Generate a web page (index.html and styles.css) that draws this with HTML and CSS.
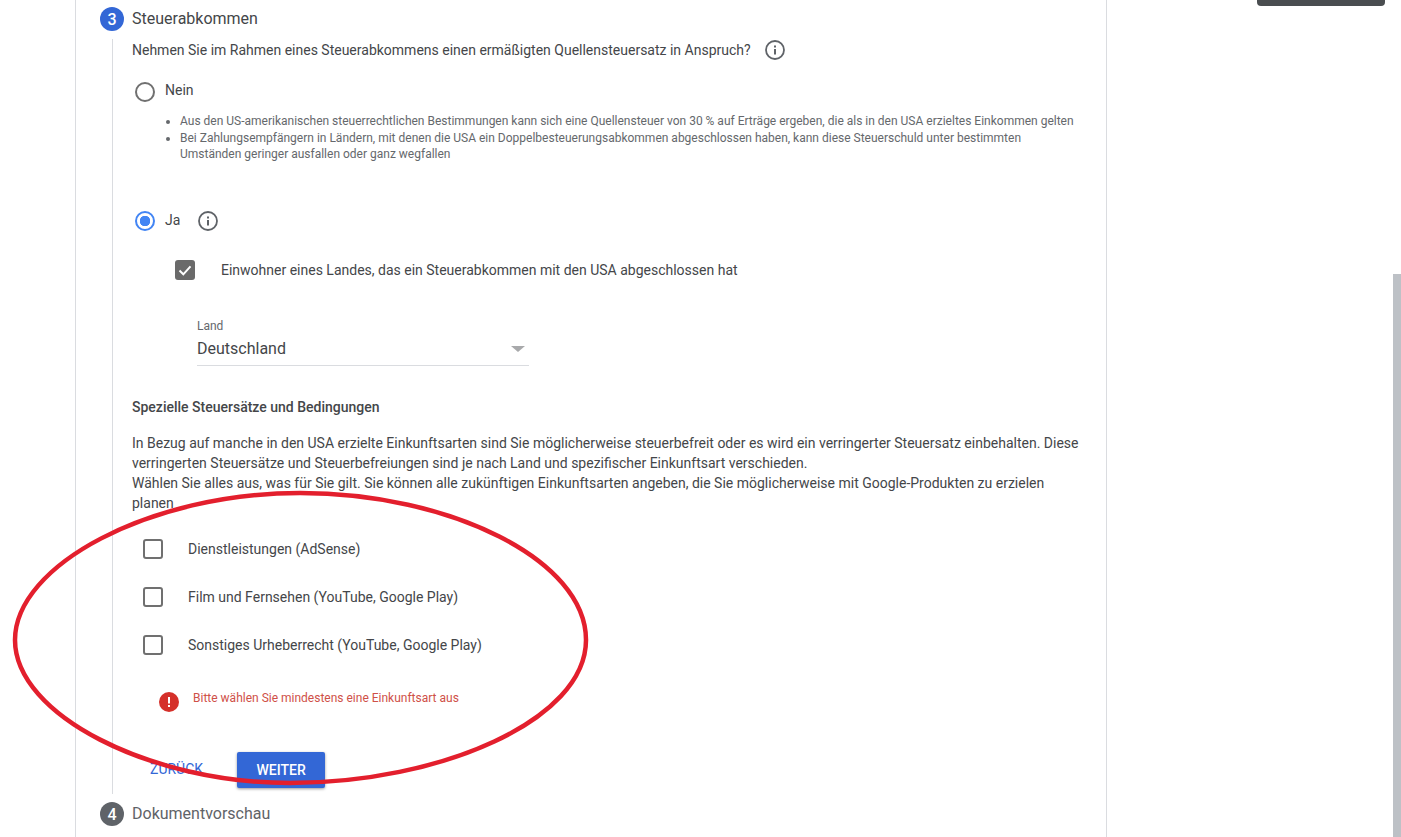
FILE: index.html
```html
<!DOCTYPE html>
<html lang="de">
<head>
  <meta charset="UTF-8" />
  <title>Steuerinformationen</title>
  <link rel="stylesheet" href="styles.css">
</head>
<body>
  <div class="topbar">
    <div class="top-tab"></div>
  </div>

  <div class="card">
    <div class="step-head">
      <span class="step-num active">3</span>
      <span class="step-title">Steuerabkommen</span>
    </div>

    <div class="step-body">
      <div class="question">
        <span>Nehmen Sie im Rahmen eines Steuerabkommens einen ermäßigten Quellensteuersatz in Anspruch?</span>
        <svg class="info" viewBox="0 0 20 20"><circle cx="10" cy="10" r="9" fill="none" stroke="#5f6368" stroke-width="1.8"/><rect x="9" y="9" width="2" height="5.5" fill="#5f6368"/><rect x="9" y="5.5" width="2" height="2" fill="#5f6368"/></svg>
      </div>

      <div class="radio-row nein">
        <span class="radio"></span>
        <span class="radio-label">Nein</span>
      </div>
      <ul class="notes">
        <li>Aus den US-amerikanischen steuerrechtlichen Bestimmungen kann sich eine Quellensteuer von 30 % auf Erträge ergeben, die als in den USA erzieltes Einkommen gelten</li>
        <li>Bei Zahlungsempfängern in Ländern, mit denen die USA ein Doppelbesteuerungsabkommen abgeschlossen haben, kann diese Steuerschuld unter bestimmten Umständen geringer ausfallen oder ganz wegfallen</li>
      </ul>

      <div class="radio-row ja">
        <span class="radio checked"></span>
        <span class="radio-label">Ja</span>
        <svg class="info" viewBox="0 0 20 20"><circle cx="10" cy="10" r="9" fill="none" stroke="#5f6368" stroke-width="1.8"/><rect x="9" y="9" width="2" height="5.5" fill="#5f6368"/><rect x="9" y="5.5" width="2" height="2" fill="#5f6368"/></svg>
      </div>

      <div class="resident">
        <span class="check on">
          <svg viewBox="0 0 20 20"><path d="M4.5 10.5l3.8 3.8 7.2-8" fill="none" stroke="#fff" stroke-width="2"/></svg>
        </span>
        <span>Einwohner eines Landes, das ein Steuerabkommen mit den USA abgeschlossen hat</span>
      </div>

      <div class="select">
        <div class="select-label">Land</div>
        <div class="select-value">
          <span>Deutschland</span>
          <span class="arrow"></span>
        </div>
      </div>

      <h3 class="sub">Spezielle Steuersätze und Bedingungen</h3>
      <p class="text">In Bezug auf manche in den USA erzielte Einkunftsarten sind Sie möglicherweise steuerbefreit oder es wird ein verringerter Steuersatz einbehalten. Diese verringerten Steuersätze und Steuerbefreiungen sind je nach Land und spezifischer Einkunftsart verschieden.<br>Wählen Sie alles aus, was für Sie gilt. Sie können alle zukünftigen Einkunftsarten angeben, die Sie möglicherweise mit Google-Produkten zu erzielen planen</p>

      <div class="options">
        <div class="option"><span class="check"></span><span>Dienstleistungen (AdSense)</span></div>
        <div class="option"><span class="check"></span><span>Film und Fernsehen (YouTube, Google Play)</span></div>
        <div class="option"><span class="check"></span><span>Sonstiges Urheberrecht (YouTube, Google Play)</span></div>
      </div>

      <div class="error">
        <svg class="error-icon" viewBox="0 0 20 20"><circle cx="10" cy="10" r="10" fill="#d5302a"/><rect x="9" y="5" width="2" height="6.5" fill="#fff"/><rect x="9" y="13" width="2" height="2" fill="#fff"/></svg>
        <span class="error-text">Bitte wählen Sie mindestens eine Einkunftsart aus</span>
      </div>

      <div class="actions">
        <button class="btn-back">ZURÜCK</button>
        <button class="btn-next">WEITER</button>
      </div>
    </div>

    <div class="step-head next">
      <span class="step-num">4</span>
      <span class="step-title muted">Dokumentvorschau</span>
    </div>
  </div>

  <div class="scrollbar"></div>

  <!-- rote Markierung ueber dem Screenshot, freihand gezogen -->
  <svg class="marker" viewBox="0 0 1401 837">
    <path d="M15 640C15 565 150 493 300 493C450 493 586 560 586 640C586 720 440 783 290 783C150 783 15 715 15 640Z" fill="none" stroke="#e31f2d" stroke-width="4.5"/>
  </svg>
</body>
</html>
```

FILE: styles.css
```css
html, body {
  height: 100%;
}

body {
  font-family: 'Roboto', sans-serif;
  font-size: 14px;
  color: #444649;
  background: #fff;
  margin: 0;
  padding: 0;
  overflow: hidden;
  position: relative;
}

.topbar {
  position: absolute;
  top: 0;
  right: 16px;
}

.top-tab {
  width: 128px;
  height: 6px;
  background: #4a4d50;
  border-radius: 0 0 4px 4px;
}

.card {
  width: 1006px;
  height: 837px;
  margin-left: 75px;
  border-left: 1px solid #dadce0;
  border-right: 1px solid #dadce0;
  padding: 7px 0 0 24px;
}

.step-head {
  display: flex;
  align-items: center;
  gap: 8px;
  height: 24px;
}

.step-num {
  width: 24px;
  height: 24px;
  border-radius: 50%;
  background: #5f6368;
  color: #fff;
  font-size: 16px;
  font-weight: 500;
  display: flex;
  align-items: center;
  justify-content: center;
}

.step-num.active {
  background: #3367d6;
}

.step-title {
  font-size: 16px;
  color: #444649;
  margin-top: -2px;
}

.step-title.muted {
  color: #5f6368;
}

.step-body {
  margin: 8px 0 8px 12px;
  padding-left: 19px;
  border-left: 1px solid #dadce0;
  height: 755px;
  box-sizing: border-box;
}

.question {
  display: flex;
  align-items: center;
  gap: 14px;
  height: 22px;
}

.info {
  width: 20px;
  height: 20px;
  flex: none;
}

.radio-row {
  display: flex;
  margin-left: 3px;
}

.radio-row.nein {
  margin-top: 21px;
}

.radio-row.ja {
  margin-top: 49px;
  align-items: center;
}

.radio-row.ja .info {
  margin-left: 18px;
}

.radio {
  width: 20px;
  height: 20px;
  box-sizing: border-box;
  border: 2px solid #707070;
  border-radius: 50%;
  background: #fff;
  flex: none;
}

.radio.checked {
  border-color: #4285f4;
  background: radial-gradient(circle, #4285f4 0 5px, #fff 5.5px);
}

.radio-label {
  margin-left: 10px;
  line-height: 20px;
  margin-top: -2px;
}

.notes {
  margin: 11px 0 0;
  padding: 0 0 0 48px;
  font-size: 12px;
  line-height: 16px;
  color: #65686c;
  width: 900px;
}

.notes li:first-child {
  margin-bottom: 1px;
}

.resident {
  display: flex;
  align-items: center;
  height: 20px;
  margin: 29px 0 0 43px;
}

.check {
  width: 20px;
  height: 20px;
  box-sizing: border-box;
  border: 2px solid #707070;
  border-radius: 3px;
  flex: none;
}

.check.on {
  border: 0;
  background: #6a6a6a;
  margin-right: 26px;
}

.check.on svg {
  display: block;
  width: 20px;
  height: 20px;
}

.select {
  width: 332px;
  margin: 39px 0 0 65px;
  border-bottom: 1px solid #dadce0;
}

.select-label {
  font-size: 12px;
  line-height: 14px;
  color: #65686c;
}

.select-value {
  display: flex;
  justify-content: space-between;
  align-items: center;
  font-size: 16px;
  line-height: 24px;
  height: 29px;
  padding: 1px 4px 2px 0;
  color: #444649;
}

.arrow {
  width: 0;
  height: 0;
  border-left: 7px solid transparent;
  border-right: 7px solid transparent;
  border-top: 6px solid #a8a9ab;
}

.sub {
  font-size: 14px;
  font-weight: 500;
  line-height: 20px;
  margin: 31px 0 0;
  color: #444649;
}

.text {
  margin: 16px 0 0;
  line-height: 20px;
  width: 950px;
}

.options {
  margin: 26px 0 0 11px;
  display: flex;
  flex-direction: column;
  gap: 28px;
}

.option {
  display: flex;
  align-items: center;
  gap: 25px;
  height: 20px;
}

.error {
  display: flex;
  margin: 32px 0 0 27px;
  color: #cf5048;
  font-size: 12px;
  gap: 14px;
}

.error-icon {
  width: 20px;
  height: 20px;
  flex: none;
  margin-top: 5px;
}

.error-text {
  padding-top: 4px;
}

.actions {
  display: flex;
  align-items: center;
  margin: 40px 0 0 18px;
  gap: 34px;
}

.btn-back {
  background: none;
  border: none;
  padding: 0;
  margin-top: -3px;
  font: inherit;
  font-weight: 400;
  color: #3367d6;
}

.btn-next {
  background: #3367d6;
  color: #fff;
  border: none;
  width: 88px;
  height: 36px;
  border-radius: 2px;
  font-family: inherit;
  font-size: 14px;
  font-weight: 500;
  box-shadow: 0 1px 3px rgba(0,0,0,0.4);
}

.scrollbar {
  position: absolute;
  right: 0;
  top: 274px;
  bottom: 0;
  width: 8px;
  background: #bdc1c6;
}

.marker {
  position: absolute;
  left: 0;
  top: 0;
  width: 1401px;
  height: 837px;
  pointer-events: none;
}
```
